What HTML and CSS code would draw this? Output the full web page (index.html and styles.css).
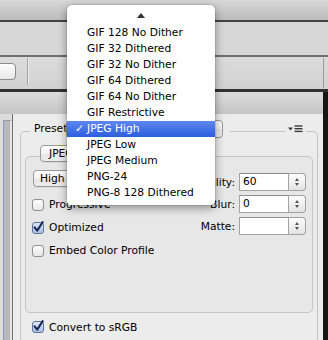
FILE: index.html
```html
<!DOCTYPE html>
<html>
<head>
<meta charset="utf-8">
<link rel="stylesheet" href="styles.css">
</head>
<body>
<div class="titlebar"></div>
<div class="strip"></div>
<div class="toolbar">
  <div class="tbtn"></div>
  <div class="tsep"></div>
  <div class="tfill"></div>
  <div class="tend"></div>
</div>
<div class="main">
  <div class="window">
    <div class="band"></div>
    <div class="body">
      <div class="sidebar"><div class="list"></div></div>
      <div class="panel">
        <div class="group">
          <div class="ghead">
            <span class="legend">Preset:</span>
            <span class="popup presetpop"></span>
            <span class="gap"></span>
            <span class="fill"></span>
            <span class="gicon"><svg width="15" height="8" viewBox="0 0 15 8"><path d="M0 2.6 H5 L2.5 5.6 Z" fill="#3a3a3a"/><rect x="6.5" y="0.3" width="8" height="1.4" fill="#3a3a3a"/><rect x="6.5" y="3" width="8" height="1.4" fill="#3a3a3a"/><rect x="6.5" y="5.7" width="8" height="1.4" fill="#3a3a3a"/></svg></span>
          </div>
          <div class="inner">
            <div class="popup fmt">JPEG</div>
            <div class="cols">
              <div class="left">
                <div class="popup qual">High</div>
                <div class="cb first"><span class="box"></span>Progressive</div>
                <div class="cb"><span class="box on"><svg width="13" height="13" viewBox="0 0 13 13"><path d="M2.6 6.4 L5.2 9.6 L10.6 1.2" fill="none" stroke="#1c2652" stroke-width="2.1" stroke-linecap="round" stroke-linejoin="round"/></svg></span>Optimized</div>
                <div class="cb"><span class="box"></span>Embed Color Profile</div>
              </div>
              <div class="right">
                <div class="field"><span class="lbl">Quality:</span><span class="inp">60</span><span class="step"><i class="up"></i><i class="dn"></i></span></div>
                <div class="field"><span class="lbl">Blur:</span><span class="inp">0</span><span class="step"><i class="up"></i><i class="dn"></i></span></div>
                <div class="field"><span class="lbl">Matte:</span><span class="inp"></span><span class="step"><i class="up"></i><i class="dn"></i></span></div>
              </div>
            </div>
          </div>
          <div class="cb convert"><span class="box on"><svg width="13" height="13" viewBox="0 0 13 13"><path d="M2.6 6.4 L5.2 9.6 L10.6 1.2" fill="none" stroke="#1c2652" stroke-width="2.1" stroke-linecap="round" stroke-linejoin="round"/></svg></span>Convert to sRGB</div>
        </div>
      </div>
    </div>
  </div>
  <div class="dark"></div>
</div>
<div class="menu">
  <div class="mtop"><span class="tri"></span></div>
  <div class="mi"><span class="chk"></span>GIF 128 No Dither</div>
  <div class="mi"><span class="chk"></span>GIF 32 Dithered</div>
  <div class="mi"><span class="chk"></span>GIF 32 No Dither</div>
  <div class="mi"><span class="chk"></span>GIF 64 Dithered</div>
  <div class="mi"><span class="chk"></span>GIF 64 No Dither</div>
  <div class="mi"><span class="chk"></span>GIF Restrictive</div>
  <div class="mi sel"><span class="chk">✓</span>JPEG High</div>
  <div class="mi"><span class="chk"></span>JPEG Low</div>
  <div class="mi"><span class="chk"></span>JPEG Medium</div>
  <div class="mi"><span class="chk"></span>PNG-24</div>
  <div class="mi"><span class="chk"></span>PNG-8 128 Dithered</div>
</div>
</body>
</html>
```
FILE: styles.css
```css
html, body {
  margin: 0;
  padding: 0;
}
body {
  width: 328px;
  height: 340px;
  overflow: hidden;
  position: relative;
  font-family: "DejaVu Sans", sans-serif;
  font-size: 10.7px;
  color: #000;
  background: #d6d6d6;
}
.titlebar {
  height: 20px;
  background: linear-gradient(#d8d8d8, #bcbcbc);
  border-bottom: 2px solid #444;
}
.strip {
  height: 33px;
  background: #d7d7d7;
  border-bottom: 2px solid #6e6e6e;
}
.toolbar {
  height: 32px;
  display: flex;
  background: linear-gradient(#dbdbdb, #d2d2d2);
  border-bottom: 3px solid #313131;
}
.tbtn {
  width: 20px;
  height: 15px;
  margin: 6px 0 0 -6px;
  border: 1px solid #8b8b8b;
  border-radius: 4px;
  background: linear-gradient(#fdfdfd, #e8e8e8);
}
.tsep {
  width: 1px;
  height: 27px;
  margin: 1px 0 0 11px;
  background: #a3a3a3;
  box-shadow: 1px 0 0 #ebebeb;
}
.tfill { flex: 1; }
.tend {
  width: 1px;
  margin: 1px 4px 1px 0;
  background: #9c9c9c;
}
.main {
  display: flex;
  height: 248px;
}
.window {
  width: 323px;
  display: flex;
  flex-direction: column;
}
.dark {
  flex: 1;
  background: #161616;
}
.band {
  height: 22px;
  background: linear-gradient(#dddddd, #c5c5c5);
  border-top-right-radius: 4px;
}
.body {
  flex: 1;
  display: flex;
  min-height: 0;
  background: #ececec;
}
.sidebar {
  width: 13px;
  box-sizing: border-box;
  padding: 6px 0 0 3px;
  border-right: 1px solid #6f6f6f;
  display: flex;
  background: #dcdcdc;
}
.list {
  flex: 1;
  background: #b9b9b9;
  border-left: 1px solid #7c9bd0;
  border-top: 1px solid #9c9c9c;
  border-right: 2px solid #e4e4e4;
}
.panel {
  flex: 1;
  padding: 17px 5px 0 7px;
  overflow: hidden;
}
.group {
  border: 1px solid #c4c4c4;
  border-bottom: none;
  border-radius: 5px 5px 0 0;
  height: 260px;
}
.ghead {
  display: flex;
  align-items: center;
  height: 18px;
  margin-top: -12px;
  padding: 0 11px 0 9px;
}
.legend {
  width: 36px;
  box-sizing: border-box;
  padding-left: 4px;
  line-height: 18px;
  background: #ececec;
}
.popup {
  box-sizing: border-box;
  border: 1px solid #989898;
  border-radius: 4px;
  background: linear-gradient(#ffffff, #f3f3f3 50%, #e6e6e6 51%, #ededed);
  box-shadow: 0 1px 0 rgba(0,0,0,0.06);
  display: flex;
  align-items: center;
}
.presetpop {
  width: 157px;
  height: 18px;
}
.gap {
  width: 7px;
  height: 18px;
  background: #ececec;
}
.fill { flex: 1; }
.gicon {
  width: 21px;
  height: 18px;
  background: #ececec;
  display: flex;
  align-items: center;
  justify-content: center;
}
.inner {
  margin: 18px 0 0 4px;
  width: 288px;
  height: 157px;
  box-sizing: border-box;
  border: 1px solid #c6c6c6;
  border-radius: 5px;
  background: #e7e7e7;
}
.fmt {
  margin: -12px 0 0 14px;
  width: 60px;
  height: 17px;
  padding-left: 8px;
}
.cols {
  display: flex;
  justify-content: space-between;
}
.left {
  padding: 8px 0 0 7px;
}
.qual {
  width: 60px;
  height: 17px;
  padding-left: 6px;
}
.cb {
  display: flex;
  align-items: center;
  height: 23px;
  margin-left: -1px;
}
.cb.first { margin-top: 6px; }
.box {
  width: 12px;
  height: 12px;
  box-sizing: border-box;
  border: 1px solid #8e8e8e;
  border-radius: 3px;
  background: linear-gradient(#ffffff, #e6e6e6);
  margin-right: 5px;
  position: relative;
  flex: none;
}
.box.on {
  background: linear-gradient(#dce7f7, #a7c0e6);
  border-color: #5e7497;
}
.box svg {
  position: absolute;
  left: -1px;
  top: -2px;
}
.right {
  padding: 11px 6px 0 0;
  display: flex;
  flex-direction: column;
  gap: 4px;
}
.field {
  display: flex;
  align-items: center;
  justify-content: flex-end;
  height: 18px;
}
.lbl { margin-right: 4px; }
.inp {
  width: 50px;
  height: 18px;
  box-sizing: border-box;
  border: 1px solid #a3a3a3;
  border-top-color: #8c8c8c;
  background: #fff;
  padding-left: 3px;
  line-height: 16px;
}
.step {
  width: 17px;
  height: 18px;
  box-sizing: border-box;
  border: 1px solid #a0a0a0;
  border-left: none;
  border-radius: 0 4px 4px 0;
  background: linear-gradient(#fdfdfd, #e3e3e3);
  display: flex;
  flex-direction: column;
  align-items: center;
  justify-content: center;
  gap: 2px;
}
.step i {
  display: block;
  width: 0;
  height: 0;
  border-left: 2.5px solid transparent;
  border-right: 2.5px solid transparent;
}
.step .up { border-bottom: 3px solid #555; }
.step .dn { border-top: 3px solid #555; }
.convert {
  margin: 3px 0 0 11px;
  height: 22px;
}
.menu {
  position: absolute;
  left: 67px;
  top: 5px;
  width: 148px;
  padding-bottom: 4px;
  background: #fff;
  border-radius: 5px 5px 4px 4px;
  box-shadow: 0 3px 10px rgba(0,0,0,0.4), 0 0 0 1px rgba(0,0,0,0.08);
}
.mtop {
  height: 20px;
  display: flex;
  align-items: center;
  justify-content: center;
}
.tri {
  width: 0;
  height: 0;
  border-left: 4px solid transparent;
  border-right: 4px solid transparent;
  border-bottom: 5px solid #333;
}
.mi {
  height: 16px;
  line-height: 16px;
  padding-left: 8px;
  display: flex;
  white-space: nowrap;
}
.chk {
  width: 12px;
  flex: none;
}
.mi.sel {
  background: linear-gradient(#5f88ee, #2b5ddf);
  color: #fff;
}
```
